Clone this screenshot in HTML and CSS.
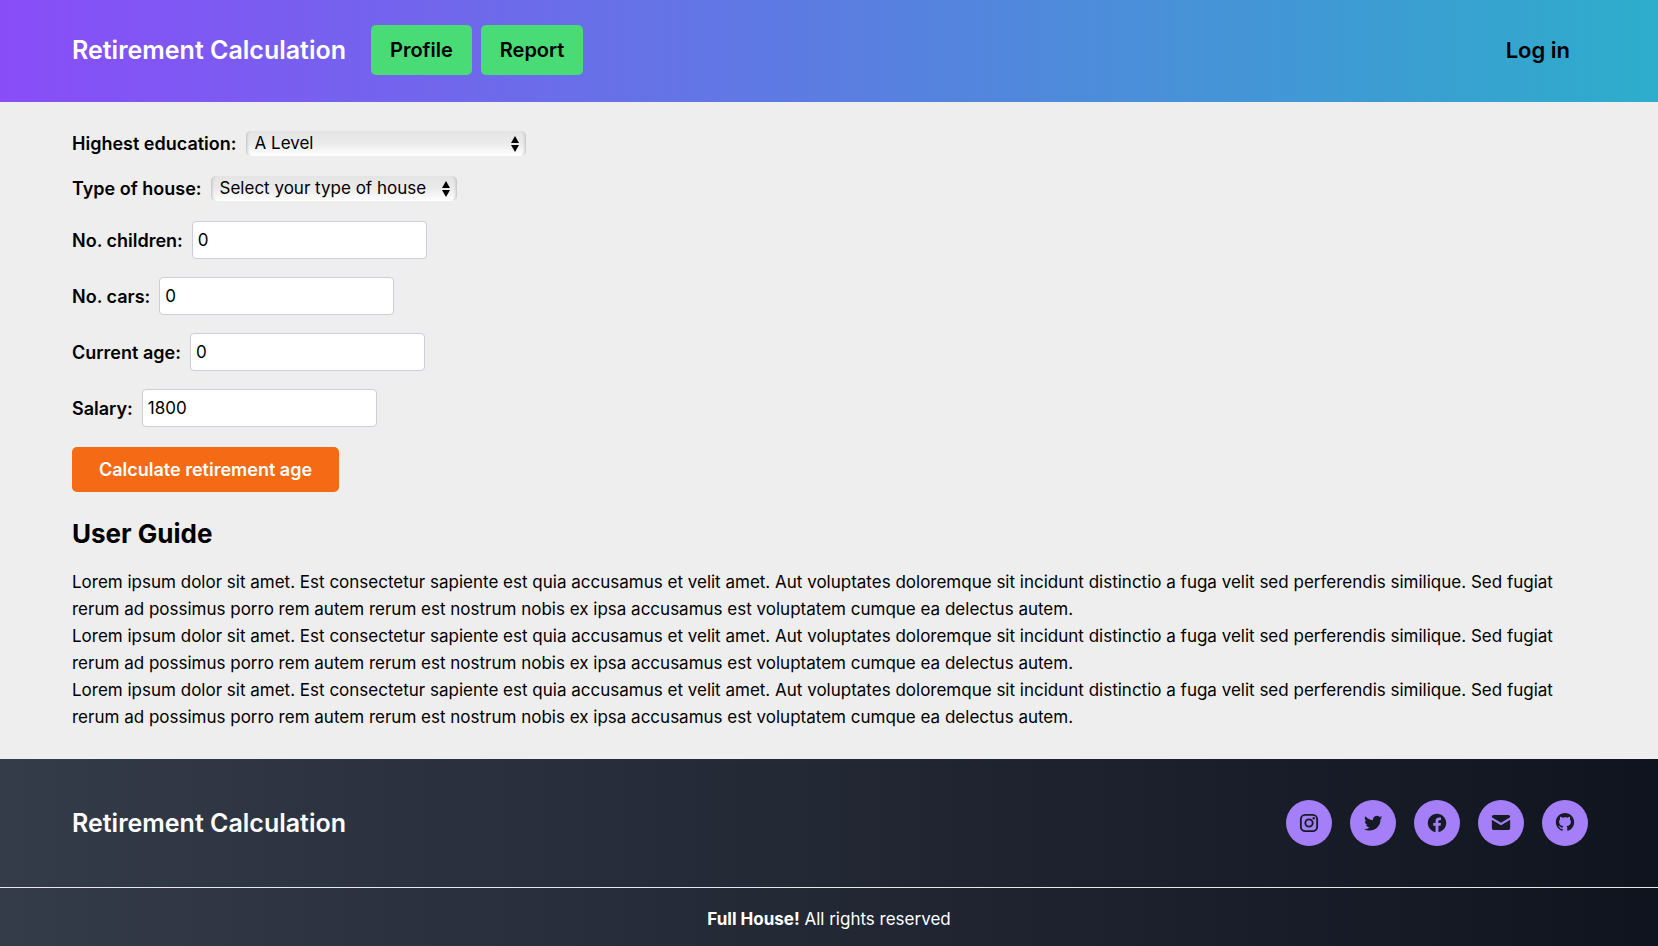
FILE: index.html
```html
<!DOCTYPE html>
<html lang="en">
<head>
<meta charset="utf-8">
<meta name="viewport" content="width=device-width, initial-scale=1">
<title>Retirement Calculation</title>
<link rel="stylesheet" href="styles.css">
</head>
<body>
<header class="header">
  <a class="brand" href="#">Retirement Calculation</a>
  <nav class="nav">
    <a class="nav-link" href="#">Profile</a>
    <a class="nav-link" href="#">Report</a>
  </nav>
  <a class="login" href="#">Log in</a>
</header>

<main class="main">
  <form class="form">
    <div class="row row-select">
      <label class="label" for="education">Highest education:</label>
      <span class="select-wrap">
        <select class="select select-wide" id="education"><option>A Level</option></select>
        <svg class="select-arrows" viewBox="0 0 8 16" aria-hidden="true"><path d="M4 0l4 7H0zM4 16l4-7H0z"/></svg>
      </span>
    </div>
    <div class="row row-select">
      <label class="label" for="house">Type of house:</label>
      <span class="select-wrap">
        <select class="select" id="house"><option>Select your type of house</option></select>
        <svg class="select-arrows" viewBox="0 0 8 16" aria-hidden="true"><path d="M4 0l4 7H0zM4 16l4-7H0z"/></svg>
      </span>
    </div>
    <div class="row">
      <label class="label" for="children">No. children:</label>
      <input class="input" id="children" type="text" inputmode="numeric" value="0">
    </div>
    <div class="row">
      <label class="label" for="cars">No. cars:</label>
      <input class="input" id="cars" type="text" inputmode="numeric" value="0">
    </div>
    <div class="row">
      <label class="label" for="age">Current age:</label>
      <input class="input" id="age" type="text" inputmode="numeric" value="0">
    </div>
    <div class="row">
      <label class="label" for="salary">Salary:</label>
      <input class="input" id="salary" type="text" inputmode="numeric" value="1800">
    </div>
    <button class="submit" type="button">Calculate retirement age</button>
  </form>

  <section class="guide">
    <h2 class="guide-title">User Guide</h2>
    <p class="guide-text">Lorem ipsum dolor sit amet. Est consectetur sapiente est quia accusamus et velit amet. Aut voluptates doloremque sit incidunt distinctio a fuga velit sed perferendis similique. Sed fugiat rerum ad possimus porro rem autem rerum est nostrum nobis ex ipsa accusamus est voluptatem cumque ea delectus autem.</p>
    <p class="guide-text">Lorem ipsum dolor sit amet. Est consectetur sapiente est quia accusamus et velit amet. Aut voluptates doloremque sit incidunt distinctio a fuga velit sed perferendis similique. Sed fugiat rerum ad possimus porro rem autem rerum est nostrum nobis ex ipsa accusamus est voluptatem cumque ea delectus autem.</p>
    <p class="guide-text">Lorem ipsum dolor sit amet. Est consectetur sapiente est quia accusamus et velit amet. Aut voluptates doloremque sit incidunt distinctio a fuga velit sed perferendis similique. Sed fugiat rerum ad possimus porro rem autem rerum est nostrum nobis ex ipsa accusamus est voluptatem cumque ea delectus autem.</p>
  </section>
</main>

<footer class="footer">
  <div class="footer-top">
    <a class="brand" href="#">Retirement Calculation</a>
    <div class="social">
      <a class="social-link" href="#" aria-label="Instagram">
        <svg class="icon" viewBox="0 0 24 24"><rect x="3.1" y="3.1" width="17.8" height="17.8" rx="4.8" fill="none" stroke="currentColor" stroke-width="2"/><circle cx="12" cy="12" r="4" fill="none" stroke="currentColor" stroke-width="2"/><circle cx="17.2" cy="6.8" r="1.3"/></svg>
      </a>
      <a class="social-link" href="#" aria-label="Twitter">
        <svg class="icon" viewBox="0 0 24 24"><path d="M22.2 5.9c-.7.3-1.5.6-2.3.7.8-.5 1.5-1.3 1.8-2.2-.8.5-1.7.8-2.6 1A4.1 4.1 0 0 0 12.1 9c-3.4-.2-6.4-1.8-8.5-4.3-1 1.7-.6 4.100 1.300 5.500-.7 0-1.300-.2-1.900-.5 0 1.900 1.300 3.700 3.300 4.100-.6.2-1.200.2-1.900.1.500 1.600 2 2.800 3.900 2.900A8.300 8.300 0 0 1 2.200 18.500c8.100 4.700 18-.5 18-10.500v-.5c.8-.6 1.500-1.300 2-1.600z"/></svg>
      </a>
      <a class="social-link" href="#" aria-label="Facebook">
        <svg class="icon" viewBox="0 0 24 24"><path d="M12 2C6.500 2 2 6.500 2 12c0 5 3.700 9.100 8.400 9.900v-7H7.900V12h2.500V9.800c0-2.500 1.500-3.900 3.800-3.900 1.100 0 2.200.2 2.200.2v2.500h-1.300c-1.200 0-1.600.8-1.600 1.600V12h2.800l-.4 2.900h-2.300v7C18.300 21.100 22 17 22 12c0-5.500-4.500-10-10-10z"/></svg>
      </a>
      <a class="social-link" href="#" aria-label="Email">
        <svg class="icon" viewBox="0 0 24 24"><path d="M2 5.600C2 4.200 2.800 3.400 4.100 3.400h15.800c1.300 0 2.100.8 2.100 2.200L12 11.800zM2 8.400l10 6 10-6v9.100c0 1.300-.8 2.100-2.100 2.100H4.100c-1.300 0-2.100-.8-2.100-2.100z"/></svg>
      </a>
      <a class="social-link" href="#" aria-label="GitHub">
        <svg class="icon" viewBox="0 0 24 24"><path d="M12 1C6.477 1 2 5.484 2 11.017c0 4.425 2.865 8.180 6.839 9.504.5.092.682-.217.682-.483 0-.237-.008-.868-.013-1.703-2.782.605-3.369-1.343-3.369-1.343-.454-1.158-1.110-1.466-1.110-1.466-.908-.620.069-.608.069-.608 1.003.070 1.531 1.032 1.531 1.032.892 1.530 2.341 1.088 2.910.832.092-.647.350-1.088.636-1.338-2.220-.253-4.555-1.113-4.555-4.951 0-1.093.390-1.988 1.029-2.688-.103-.253-.446-1.272.098-2.650 0 0 .840-.270 2.750 1.026A9.564 9.564 0 0112 5.844c.850.004 1.705.115 2.504.337 1.909-1.296 2.747-1.027 2.747-1.027.546 1.379.202 2.398.100 2.651.640.700 1.028 1.595 1.028 2.688 0 3.848-2.339 4.695-4.566 4.943.359.309.678.920.678 1.855 0 1.338-.012 2.419-.012 2.747 0 .268.180.580.688.482A10.019 10.019 0 0022 11.017C22 5.484 17.522 1 12 1z"/></svg>
      </a>
    </div>
  </div>
  <p class="copyright"><strong>Full House!</strong> All rights reserved</p>
</footer>
</body>
</html>
```

FILE: styles.css
```css
* {
  box-sizing: border-box;
}

body {
  margin: 0;
  min-height: 100vh;
  display: flex;
  flex-direction: column;
  background: #eeeeee;
  color: #000;
  font-family: Inter, Roboto, "Liberation Sans", sans-serif;
  font-size: 17px;
  line-height: 27px;
}

a {
  color: inherit;
  text-decoration: none;
}

.header {
  display: flex;
  align-items: center;
  padding: 25px 88px 27px 72px;
  background: linear-gradient(to right, #894df8, #2dadcb);
}

.brand {
  color: #fff;
  font-size: 25px;
  font-weight: 600;
  line-height: 36px;
}

.nav {
  display: flex;
  gap: 9px;
  margin-left: 25px;
}

.nav-link {
  padding: 11px 19px;
  border-radius: 5px;
  background: #48db76;
  font-size: 20px;
  font-weight: 600;
  line-height: 28px;
}

.login {
  margin-left: auto;
  font-size: 22px;
  font-weight: 600;
  line-height: 32px;
}

.main {
  flex: 1;
  padding: 29px 72px 28px;
}

.row {
  display: flex;
  align-items: center;
  gap: 9px;
  margin-bottom: 18px;
}

.label {
  font-size: 18px;
  font-weight: 600;
}

.select-wrap {
  display: flex;
  align-items: center;
  position: relative;
}

.row-select {
  height: 25px;
  margin-bottom: 20px;
}

.select {
  appearance: none;
  height: 25px;
  padding: 0 30px 0 9px;
  border: 0;
  border-radius: 5px;
  background: linear-gradient(#e4e4e4, #ebebeb 50%, #fff);
  box-shadow: inset 4px 0 3px -3px #bbb, inset -4px 0 3px -3px #bbb;
  color: #000;
  font: inherit;
  line-height: 25px;
}

.select-wide {
  width: 280px;
}

.select-arrows {
  position: absolute;
  right: 7px;
  width: 8px;
  height: 16px;
  pointer-events: none;
}

.input {
  width: 235px;
  height: 38px;
  padding: 0 5px;
  border: 1px solid #cbcdd8;
  border-radius: 4px;
  background: #fff;
  color: #000;
  font: inherit;
}

.submit {
  margin-top: 2px;
  padding: 9px 27px;
  border: 0;
  border-radius: 5px;
  background: #f56a15;
  color: #fff;
  font: inherit;
  font-size: 18px;
  font-weight: 600;
}

.guide-title {
  margin: 24px 0 17px;
  font-size: 26px;
  font-weight: 700;
  line-height: 36px;
}

.guide-text {
  margin: 0;
}

.footer {
  background: linear-gradient(to right, #343b49, #10141f);
  color: #fff;
}

.footer-top {
  display: flex;
  align-items: center;
  justify-content: space-between;
  padding: 41px 70px 41px 72px;
  border-bottom: 1px solid #e5e7eb;
}

.social {
  display: flex;
  gap: 18px;
}

.social-link {
  display: flex;
  align-items: center;
  justify-content: center;
  width: 46px;
  height: 46px;
  border-radius: 50%;
  background: #a47ff8;
  color: #151a25;
}

.icon {
  width: 22px;
  height: 22px;
  fill: currentColor;
}

.copyright {
  margin: 0;
  padding: 18px 0 13px;
  text-align: center;
}
```
